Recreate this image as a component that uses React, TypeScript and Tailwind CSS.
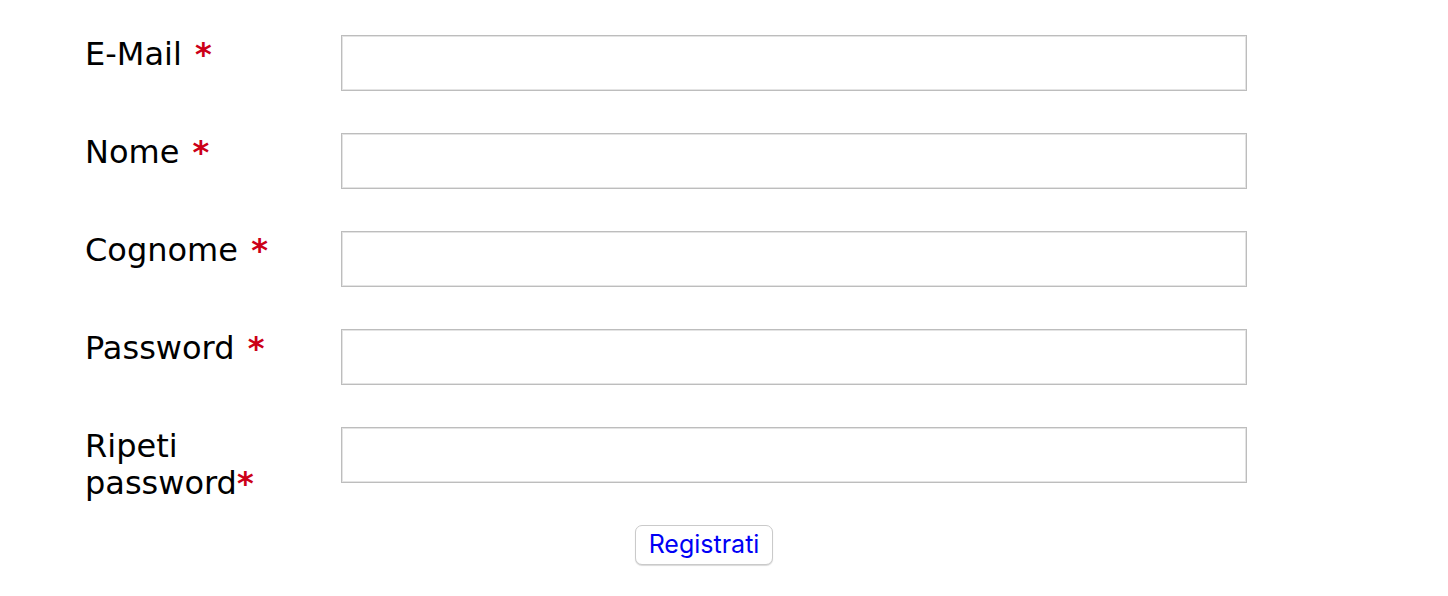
export default function App() {
  const fields = [
    { label: 'E-Mail', space: true, type: 'email' },
    { label: 'Nome', space: true, type: 'text' },
    { label: 'Cognome', space: true, type: 'text' },
    { label: 'Password', space: true, type: 'password' },
    { label: 'Ripeti password', space: false, type: 'password' },
  ]

  return (
    <div className="min-h-[596px] w-[1448px] bg-white pl-[85px] pt-[35px]">
      <form className="flex flex-col">
        <div className="flex flex-col gap-[42px]">
          {fields.map((f) => (
            <div key={f.label} className="flex items-start">
              <label
                className="w-[256px] pt-[1px] text-[32px] leading-[37px] text-black"
                style={{ fontFamily: '"DejaVu Sans", Verdana, sans-serif' }}
              >
                {f.label}
                {f.space ? ' ' : ''}
                <span className={f.space ? 'ml-[3px] font-bold text-[#cc0018]' : 'font-bold text-[#cc0018]'}>*</span>
              </label>
              <input
                type={f.type}
                className="h-[56px] w-[906px] border border-[#bdbdbd] bg-white shadow-[inset_0_0_0_1px_#e4e4e4] outline-none"
              />
            </div>
          ))}
        </div>
        <div className="mt-[23px] pl-[550px]">
          <button
            type="button"
            className="flex h-[40px] w-[138px] items-center justify-center rounded-[7px] border border-[#cacaca] bg-white text-[25px] text-[#0000f5] shadow-[0_1px_1px_rgba(0,0,0,0.15)]"
            style={{ fontFamily: 'Inter, "Liberation Sans", sans-serif' }}
          >
            Registrati
          </button>
        </div>
      </form>
    </div>
  )
}
